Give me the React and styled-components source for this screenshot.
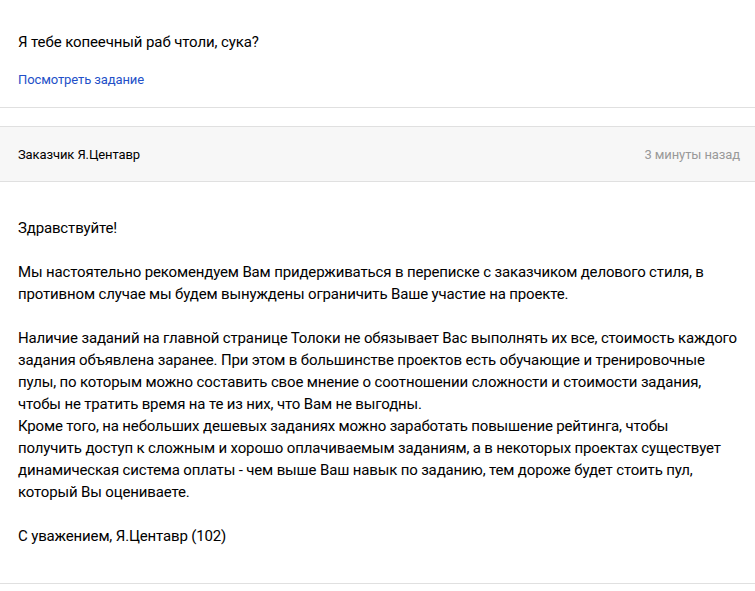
import React from "react";
import styled, { createGlobalStyle } from "styled-components";

const GlobalStyle = createGlobalStyle`
  body {
    margin: 0;
    background: #fff;
    font-family: Roboto, "Noto Sans", sans-serif;
    color: #000;
  }
`;

const messageLines = [
  ["Здравствуйте!"],
  [],
  [
    "Мы настоятельно рекомендуем Вам придерживаться в переписке с заказчиком делового стиля, в",
    "противном случае мы будем вынуждены ограничить Ваше участие на проекте.",
  ],
  [],
  [
    "Наличие заданий на главной странице Толоки не обязывает Вас выполнять их все, стоимость каждого",
    "задания объявлена заранее. При этом в большинстве проектов есть обучающие и тренировочные",
    "пулы, по которым можно составить свое мнение о соотношении сложности и стоимости задания,",
    "чтобы не тратить время на те из них, что Вам не выгодны.",
    "Кроме того, на небольших дешевых заданиях можно заработать повышение рейтинга, чтобы",
    "получить доступ к сложным и хорошо оплачиваемым заданиям, а в некоторых проектах существует",
    "динамическая система оплаты - чем выше Ваш навык по заданию, тем дороже будет стоить пул,",
    "который Вы оцениваете.",
  ],
  [],
  ["С уважением, Я.Центавр (102)"],
];

const App = () => {
  return (
    <>
      <GlobalStyle />
      <Page>
        <Question>
          <QuestionText>Я тебе копеечный раб чтоли, сука?</QuestionText>
          <TaskLink href="#">Посмотреть задание</TaskLink>
        </Question>
        <Reply>
          <ReplyHeader>
            <Author>Заказчик Я.Центавр</Author>
            <Time>3 минуты назад</Time>
          </ReplyHeader>
          <ReplyBody>
            {messageLines.map((para, i) =>
              para.length === 0 ? (
                <Blank key={i} />
              ) : (
                para.map((line, j) => <Line key={i + "-" + j}>{line}</Line>)
              )
            )}
          </ReplyBody>
        </Reply>
      </Page>
    </>
  );
};

const Page = styled.div`
  width: 755px;
`;

const Question = styled.div`
  display: flex;
  flex-direction: column;
  align-items: flex-start;
  padding: 32px 18px 18px;
  border-bottom: 1px solid #e0e0e0;
`;

const QuestionText = styled.div`
  font-size: 15px;
  line-height: 20px;
  letter-spacing: -0.1px;
  color: #000;
`;

const TaskLink = styled.a`
  margin-top: 19px;
  font-size: 13px;
  line-height: 18px;
  letter-spacing: -0.1px;
  color: #2350c8;
  text-decoration: none;
`;

const Reply = styled.div`
  margin-top: 18px;
  border-top: 1px solid #e0e0e0;
  border-bottom: 1px solid #e0e0e0;
`;

const ReplyHeader = styled.div`
  display: flex;
  justify-content: space-between;
  align-items: center;
  height: 54px;
  padding: 0 15px 0 18px;
  background: #f7f7f7;
  border-bottom: 1px solid #e0e0e0;
  font-size: 13px;
  letter-spacing: -0.1px;
`;

const Author = styled.span`
  color: #000;
`;

const Time = styled.span`
  color: #999;
`;

const ReplyBody = styled.div`
  padding: 35px 18px 36px;
  font-size: 15px;
  line-height: 22px;
  letter-spacing: -0.15px;
  color: #000;
`;

const Line = styled.div`
  white-space: nowrap;
`;

const Blank = styled.div`
  height: 22px;
`;

export default App;
